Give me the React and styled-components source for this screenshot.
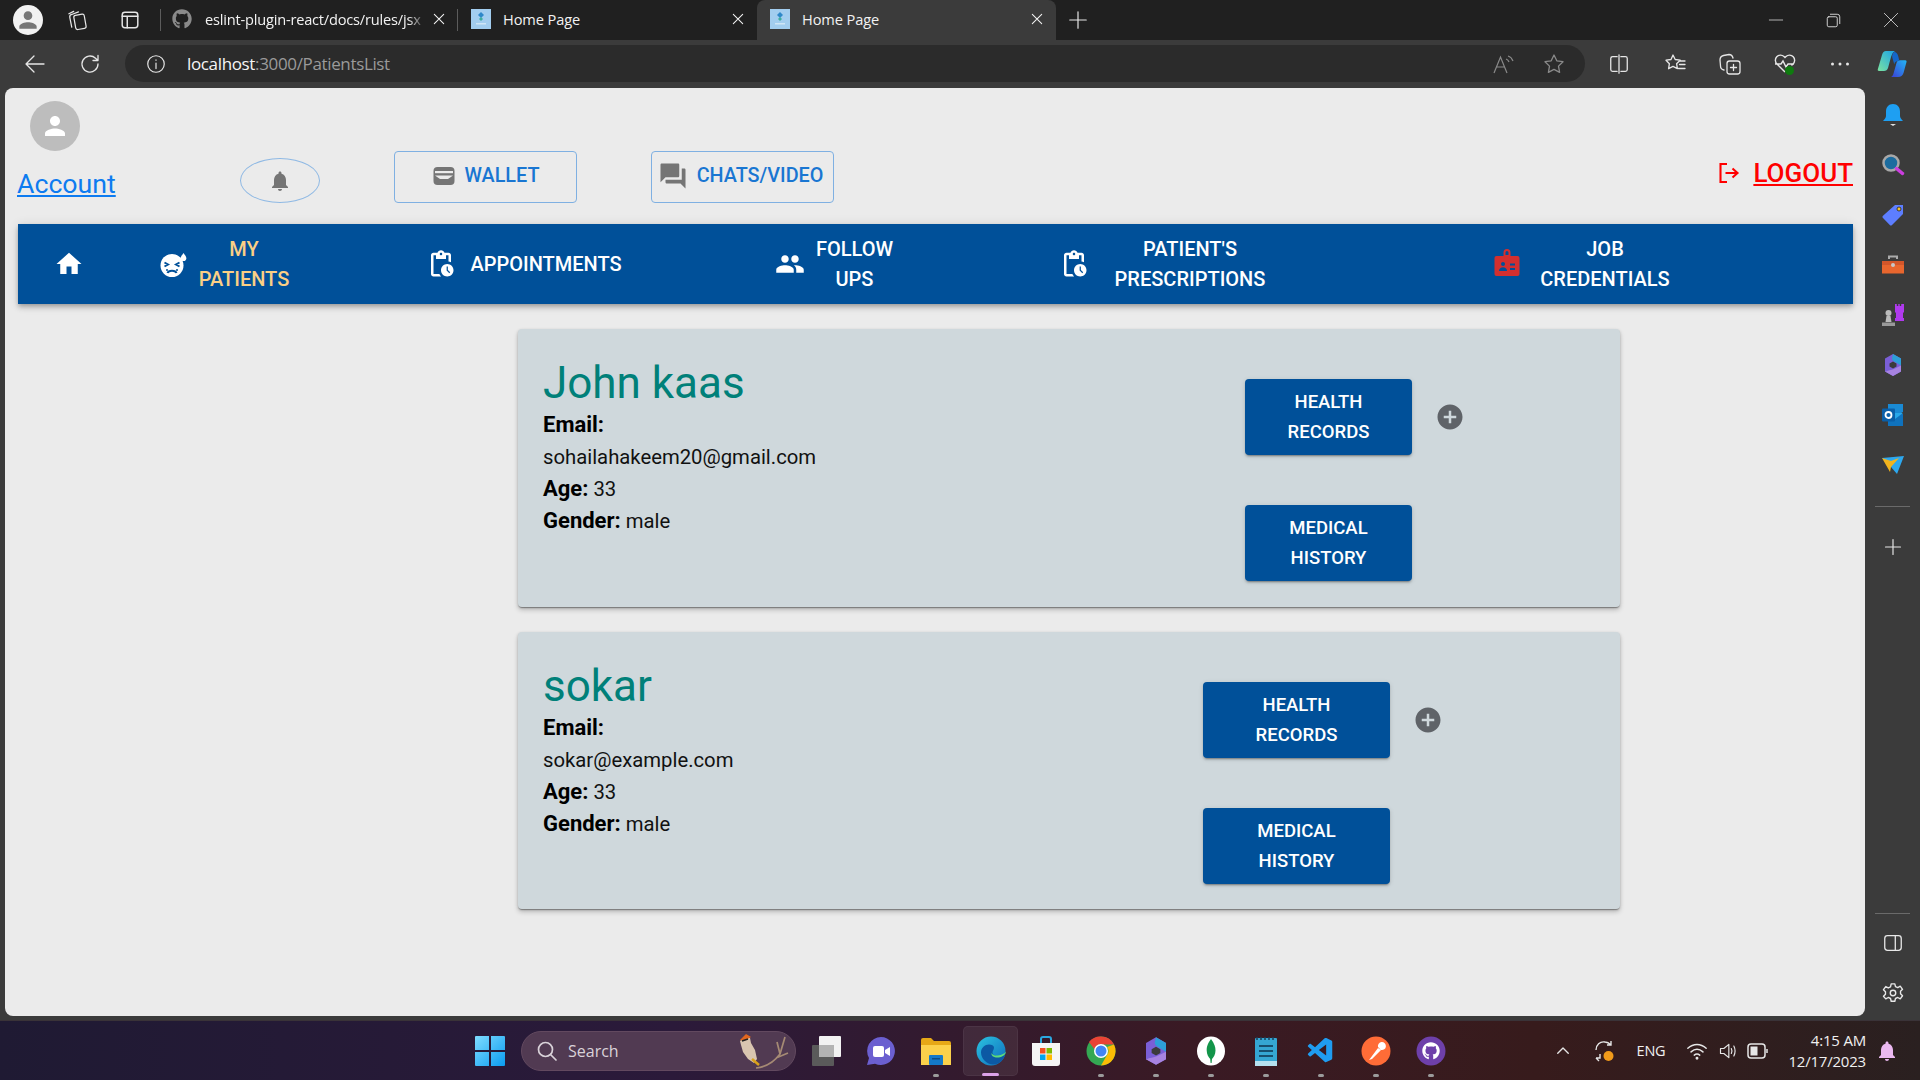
import React from "react";
import styled, { createGlobalStyle } from "styled-components";
import { FaGithub } from "react-icons/fa";
import { VscVscode } from "react-icons/vsc";

const Global = createGlobalStyle`
  html, body { margin: 0; padding: 0; background: #3b3b3b; }
  #root { width: 1920px; height: 1080px; overflow: hidden; }
  * { box-sizing: border-box; }
`;

const Shell = styled.div`
  width: 1920px; height: 1080px; display: flex; flex-direction: column;
  background: #3b3b3b; font-family: Roboto, sans-serif;
`;
const TabStrip = styled.div`
  height: 40px; flex: none; display: flex; align-items: center; background: #202020;
  padding-left: 13px; color: #f2f2f2; font-family: "Open Sans", sans-serif;
`;
const Profile = styled.div`
  width: 30px; height: 30px; border-radius: 50%; background: #f2f2f2; flex: none;
  display: flex; align-items: center; justify-content: center; overflow: hidden;
`;
const Slot = styled.div`
  width: ${p => p.$w}px; height: ${p => p.$h || 40}px; flex: none;
  display: flex; align-items: center; justify-content: center; color: ${p => p.$c || "#e6e6e6"};
`;
const TabSep = styled.div`
  width: 1px; height: 22px; background: #5c5c5c; flex: none; margin-left: ${p => p.$ml || 0}px;
`;
const Tab = styled.div`
  width: ${p => p.$w}px; height: 40px; flex: none; display: flex; align-items: center;
  padding: 0 ${p => p.$pr}px 2px ${p => p.$pl}px; gap: ${p => p.$gap}px;
  background: ${p => (p.$active ? "#3b3b3b" : "transparent")};
  border-radius: 8px 8px 0 0;
  > svg { flex: none; }
`;
const TabTitle = styled.span`
  flex: 1; min-width: 0; font-size: 14.6px; white-space: nowrap; letter-spacing: ${p => (p.$fade ? "-0.2px" : "-0.1px")};
  ${p => p.$fade && `
    margin-right: -8px;
    -webkit-mask-image: linear-gradient(to right, #000 92%, transparent 100%);
  `}
`;
const Favicon = styled.div`
  width: 20px; height: 20px; flex: none; background: #a2cdef;
  display: flex; align-items: center; justify-content: center;
`;
const WindowControls = styled.div`
  margin-left: auto; display: flex; flex: none;
`;
const Toolbar = styled.div`
  height: 48px; flex: none; display: flex; align-items: flex-start; background: #3b3b3b; padding-top: 5px;
`;
const AddressBar = styled.div`
  width: 1460px; height: 37px; flex: none; border-radius: 19px; background: #2b2b2b; padding-right: 6px;
  display: flex; align-items: center; font-family: "Open Sans", sans-serif;
`;
const Url = styled.div`
  font-size: 17px; color: #9a9a9a; letter-spacing: -0.35px; white-space: nowrap; flex: 1;
  b { font-weight: 400; color: #f5f5f5; }
`;
const Middle = styled.div`
  flex: 1; min-height: 0; display: flex; padding-left: 5px;
`;
const Page = styled.div`
  width: 1860px; height: 928px; flex: none; background: #ebebeb; border-radius: 8px;
`;
const Header = styled.header`
  height: 136px; display: flex; align-items: flex-end; padding: 0 12px 21px 12px;
`;
const AccountCol = styled.div`
  width: 97px; flex: none; display: flex; flex-direction: column;
`;
const Avatar = styled.div`
  width: 50px; height: 50px; margin-left: 13px; border-radius: 50%; background: #bdbdbd;
  display: flex; align-items: center; justify-content: center; color: #fff;
`;
const AccountLink = styled.a`
  font-size: 26.7px; line-height: 38px; margin-top: 14px; color: #0d7bf0; text-decoration: underline;
`;
const BellButton = styled.button`
  width: 80px; height: 45px; margin-left: 126px; flex: none; border-radius: 50%; padding: 0;
  border: 1px solid #8fb9e4; background: transparent; color: #757575;
  display: flex; align-items: center; justify-content: center;
`;
const OutlineButton = styled.button`
  width: 183px; height: 52px; margin-left: 74px; flex: none; border-radius: 4px; padding: 0 ${p => p.$pr || 0}px 2px 0;
  border: 1px solid #7fb0e2; background: transparent; color: #1976d2;
  display: flex; align-items: center; justify-content: center; gap: 9px;
  font: 500 19.8px/30px Roboto, sans-serif; text-transform: uppercase;
  svg { color: #757575; flex: none; }
`;
const Logout = styled.a`
  margin-left: auto; margin-bottom: 12px; display: flex; align-items: center; gap: 12px; color: #f00;
  font: 500 26px/36px Roboto, sans-serif; text-transform: uppercase;
  span { text-decoration: underline; }
`;
const Nav = styled.nav`
  width: 1835px; height: 80px; margin-left: 1px; background: #005099; color: #fff;
  display: grid; grid-template-columns: 102px 208px 392px 228px 428px 410px;
  box-shadow: 0 2px 4px -1px rgba(0,0,0,.2), 0 4px 5px rgba(0,0,0,.14), 0 1px 10px rgba(0,0,0,.12);
`;
const NavRow = styled.div`
  padding-left: 12px;
`;
const NavItem = styled.a`
  display: flex; align-items: center; justify-content: center; gap: ${p => p.$gap || 0}px;
  color: ${p => p.$c || "#fff"};
  svg { flex: none; }
`;
const NavLabel = styled.span`
  width: min-content; text-align: center; font: 500 20px/30px Roboto, sans-serif; text-transform: uppercase;
`;
const Main = styled.main`
  padding: 25px 0 0 513px; display: flex; flex-direction: column; gap: 25px;
`;
const Card = styled.section`
  width: 1102px; height: ${p => p.$h}px; background: #cfd8dc; border-radius: 4px; padding: 0 0 0 25px;
  display: grid; grid-template-columns: ${p => p.$left}px auto;
  box-shadow: 0 2px 1px -1px rgba(0,0,0,.2), 0 1px 1px rgba(0,0,0,.14), 0 1px 3px rgba(0,0,0,.12), 0 3px 5px rgba(0,0,0,.2);
`;
const Info = styled.div`
  padding-top: 28px; font-size: 20.3px; line-height: 32px; color: #111;
  strong { font-weight: 700; font-size: 22px; color: #000; }
`;
const Name = styled.h2`
  margin: 0; font: 400 44px/52px Roboto, sans-serif; color: #008079;
`;
const InfoLine = styled.div`
  height: 32px;
`;
const Actions = styled.div`
  padding-top: 50px; display: flex; flex-direction: column; gap: 50px;
`;
const ActionRow = styled.div`
  display: flex; align-items: center; gap: 23px; color: #5f6368;
`;
const ActionButton = styled.button`
  width: ${p => p.$w}px; height: 76px; border: 0; padding: 0; border-radius: 4px; background: #005099; color: #fff;
  font: 500 18.5px/30px Roboto, sans-serif; text-transform: uppercase;
  display: flex; align-items: center; justify-content: center; flex: none;
  box-shadow: 0 3px 1px -2px rgba(0,0,0,.2), 0 2px 2px rgba(0,0,0,.14), 0 1px 5px rgba(0,0,0,.12);
  span { width: min-content; }
`;
const Rail = styled.aside`
  flex: 1; display: flex; flex-direction: column; align-items: center; padding: 2px 0;
`;
const RailItem = styled.div`
  width: 50px; height: 50px; flex: none; display: flex; align-items: center; justify-content: center; color: #e8e8e8;
`;
const RailLine = styled.div`
  width: 35px; height: 1px; background: #6a6a6a; flex: none;
  margin-top: ${p => p.$mt || 0}px; margin-bottom: ${p => p.$mb || 0}px;
`;
const RailBottom = styled.div`
  margin-top: auto; display: flex; flex-direction: column; align-items: center;
`;
const Taskbar = styled.footer`
  height: 60px; flex: none; display: flex; align-items: center; padding-left: 462px; color: #fff;
  background: linear-gradient(90deg, #1f1a33 0%, #2b1a3a 35%, #3a1a24 62%, #371b1c 80%, #2a2020 100%);
  border-top: 1px solid #3a3338; font-family: "Open Sans", sans-serif;
`;
const TaskItem = styled.div`
  position: relative; width: 55px; height: 50px; flex: none; display: flex; align-items: center; justify-content: center;
  ${p => p.$active && "background: rgba(255,255,255,.07); border-radius: 5px; border: 1px solid rgba(255,255,255,.05);"}
`;
const Indicator = styled.span`
  position: absolute; bottom: -1px; left: 50%; height: 3px; border-radius: 2px;
  width: ${p => (p.$active ? 17 : 6)}px; margin-left: ${p => (p.$active ? -8.5 : -3)}px;
  background: ${p => (p.$active ? "#dca2e8" : "#9b9b9b")};
`;
const Search = styled.div`
  width: 275px; height: 40px; margin: 0 2px 0 4px; flex: none; border-radius: 20px; background: #513a52;
  border: 1px solid #62495f; display: flex; align-items: center; padding: 0 5px 0 13px; color: #d9d2d9; font-size: 16px; gap: 9px;
  span { flex: 1; }
`;
const Tray = styled.div`
  margin-left: auto; padding-right: 12px; display: flex; align-items: center; height: 60px; color: #f0f0f0;
`;
const TrayText = styled.div`
  width: ${p => p.$w}px; text-align: ${p => p.$a || "center"}; font-size: ${p => p.$s || 13}px; line-height: 21px; flex: none;
  letter-spacing: -0.2px;
`;

const Mui = ({ d, s = 24, c, ...rest }) => (
  <svg width={s} height={s} viewBox="0 0 24 24" fill={c || "currentColor"} {...rest}><path d={d} /></svg>
);
const P = {
  person: "M12 12c2.21 0 4-1.79 4-4s-1.79-4-4-4-4 1.79-4 4 1.79 4 4 4zm0 2c-2.67 0-8 1.34-8 4v2h16v-2c0-2.66-5.33-4-8-4z",
  bell: "M12 22c1.1 0 2-.9 2-2h-4c0 1.1.89 2 2 2zm6-6v-5c0-3.07-1.64-5.64-4.5-6.32V4c0-.83-.67-1.5-1.5-1.5s-1.5.67-1.5 1.5v.68C7.63 5.36 6 7.92 6 11v5l-2 2v1h16v-1l-2-2z",
  home: "M10 20v-6h4v6h5v-8h3L12 3 2 12h3v8z",
  forum: "M21 6h-2v9H6v2c0 .55.45 1 1 1h11l4 4V7c0-.55-.45-1-1-1zm-4 6V3c0-.55-.45-1-1-1H3c-.55 0-1 .45-1 1v14l4-4h10c.55 0 1-.45 1-1z",
  people: "M16 11c1.66 0 2.99-1.34 2.99-3S17.66 5 16 5c-1.66 0-3 1.34-3 3s1.34 3 3 3zm-8 0c1.66 0 2.99-1.34 2.99-3S9.66 5 8 5C6.34 5 5 6.34 5 8s1.34 3 3 3zm0 2c-2.33 0-7 1.17-7 3.5V19h14v-2.5c0-2.33-4.67-3.5-7-3.5zm8 0c-.29 0-.62.02-.97.05 1.16.84 1.97 1.97 1.97 3.45V19h6v-2.5c0-2.33-4.67-3.5-7-3.5z",
  add: "M12 2C6.48 2 2 6.48 2 12s4.48 10 10 10 10-4.48 10-10S17.52 2 12 2zm5 11h-4v4h-2v-4H7v-2h4V7h2v4h4v2z",
  pending: "M17 12c-2.76 0-5 2.24-5 5s2.24 5 5 5 5-2.24 5-5-2.24-5-5-5zm1.65 7.35L16.5 17.2V14h1v2.79l1.85 1.85-.7.71zM18 3h-3.18C14.4 1.84 13.3 1 12 1s-2.4.84-2.82 2H6c-1.1 0-2 .9-2 2v15c0 1.1.9 2 2 2h6.11c-.59-.57-1.07-1.25-1.42-2H6V5h2v3h8V5h2v5.08c.71.1 1.38.31 2 .6V5c0-1.1-.9-2-2-2zm-6 2c-.55 0-1-.45-1-1s.45-1 1-1 1 .45 1 1-.45 1-1 1z",
};

const Line = ({ s = 20, w = 1.3, children, c = "currentColor" }) => (
  <svg width={s} height={s} viewBox="0 0 24 24" fill="none" stroke={c} strokeWidth={w} strokeLinecap="round" strokeLinejoin="round">{children}</svg>
);

const WalletIcon = () => (
  <svg width="24" height="24" viewBox="0 0 24 24" fill="currentColor">
    <rect x="1.5" y="3" width="21" height="18" rx="4" />
    <rect x="3" y="7" width="18" height="2.2" fill="#ebebeb" />
    <path d="M3 11.5h18l-5 3.6H8z" fill="#ebebeb" />
  </svg>
);
const SickIcon = () => (
  <svg width="30" height="30" viewBox="0 0 30 30">
    <circle cx="13" cy="16.500" r="11.500" fill="#fff" />
    <path d="M24.500 4c1.800 2.400 2.800 3.800 2.800 5.200a2.800 2.800 0 0 1-5.600 0c0-1.400 1-2.800 2.800-5.200z" fill="#fff" />
    <path d="M5.500 13.500l3.500 2-3.500 2M20.500 13.500l-3.500 2 3.500 2M8.500 24c1-3 8-3 9 0" stroke="#005099" strokeWidth="2" fill="none" />
    <circle cx="8" cy="21" r="1" fill="#005099" /><circle cx="18" cy="21" r="1" fill="#005099" />
  </svg>
);
const BadgeIcon = () => (
  <svg width="30" height="30" viewBox="0 0 30 30">
    <path d="M12.500 8V3.500a2.500 2.500 0 0 1 5 0V8" fill="none" stroke="#d32f2f" strokeWidth="2" />
    <rect x="2.500" y="7" width="25" height="20" rx="2" fill="#d32f2f" />
    <rect x="12.500" y="6" width="5" height="4" fill="#d32f2f" />
    <circle cx="11" cy="15" r="2" fill="#005099" />
    <path d="M7 22c0-5 8-5 8 0z" fill="#005099" />
    <path d="M18 14.500h5v2h-5zM18 19h5v2h-5z" fill="#005099" />
  </svg>
);
const LogoutIcon = () => (
  <svg width="24" height="24" viewBox="0 0 24 24" fill="none" stroke="#f00" strokeWidth="2.100">
    <path d="M10 3H3.500v18H10M8.500 12H20M15.500 7.500L20.500 12l-5 4.500" />
  </svg>
);
const FaviconMark = () => (
  <svg width="12" height="14" viewBox="0 0 12 14">
    <path d="M6 0l3 3-3 3-3-3z" fill="#2f88c9" />
    <path d="M6 5l2 2-2 2-2-2z" fill="#3fae9f" />
    <rect x="1" y="11" width="10" height="1.500" fill="#cfe6f6" />
  </svg>
);
const Copilot = () => (
  <svg width="30" height="30" viewBox="0 0 30 30">
    <defs>
      <linearGradient id="cp1" x1="0" y1="1" x2="1" y2="0"><stop offset="0" stopColor="#7be3a0" /><stop offset="1" stopColor="#1aa2e8" /></linearGradient>
      <linearGradient id="cp2" x1="0" y1="1" x2="1" y2="0"><stop offset="0" stopColor="#3b3fd6" /><stop offset="1" stopColor="#22b6f5" /></linearGradient>
    </defs>
    <path d="M9 2h9c-2 1-3 3-4 6l-3 11c-.6 2-2 3-4 3H2c-1 0-1.500-.7-1.200-1.700L5 6c.7-2.500 2-4 4-4z" fill="url(#cp1)" />
    <path d="M14 28h7c3 0 4.500-1.500 5.500-4l3-11c.3-1-.3-1.800-1.200-1.800H23c-2 0-3 1-3.500 2.800l-3 10.500c-.5 1.800-1.300 2.800-2.500 3.500z" fill="url(#cp2)" />
    <path d="M17 3c2.500 0 3.500 1.500 4.300 4.500l1 4-3 1c-1 .4-1.800 1.500-2 3l-2-7c-.5-2 .4-4.500 1.700-5.500z" fill="#1467c9" />
  </svg>
);
const Copilot365 = ({ s = 24 }) => (
  <svg width={s} height={s} viewBox="0 0 24 24">
    <path d="M4 5.500L12 1l8 4.500V18.500L12 23l-8-4.500z" fill="#7a5fd6" />
    <path d="M12 1l8 4.500v7L14 9c-2-1-3-2-3-4z" fill="#2d9fd8" />
    <path d="M4 18.500l8 4.500 8-4.500v-6l-7 3.500c-3 1.500-6 1-9 3z" fill="#a783e0" />
    <path d="M12 8.500l3.500 2v3l-3.500 2-3.500-2v-3z" fill="#3b3b3b" />
  </svg>
);

const railIcons = [
  <svg width="22" height="24" viewBox="0 0 22 24" key="bell"><path d="M11 1c4.500 0 7 3.300 7 7.500V13c0 2 1.500 3 3 5H1c1.500-2 3-3 3-5V8.500C4 4.300 6.500 1 11 1z" fill="#1e9ff2" /><path d="M8 21h6l-3 2z" fill="#ddd" /></svg>,
  <svg width="24" height="24" viewBox="0 0 24 24" key="s"><circle cx="10" cy="10" r="7.500" fill="#1c6c9f" stroke="#a8a8a8" strokeWidth="2.500" /><path d="M15.500 15.500l6 5" stroke="#cc3ee0" strokeWidth="3.500" strokeLinecap="round" /></svg>,
  <svg width="24" height="24" viewBox="0 0 24 24" key="t"><path d="M14 2h8v9L11 22c-.7.700-1.500.700-2.200 0L2 15c-.7-.7-.7-1.500 0-2.200z" fill="#5d7eff" /><circle cx="18" cy="6" r="2" fill="#f3c22a" stroke="#222" strokeWidth=".8" /></svg>,
  <svg width="24" height="24" viewBox="0 0 24 24" key="b"><path d="M8 6V3.500h8V6" fill="none" stroke="#aaa" strokeWidth="2" /><path d="M1 8h22v4H1z" fill="#d3562a" /><path d="M1 12h22v8.500H1z" fill="#e8662e" /><circle cx="12" cy="12" r="2" fill="#c8c8c8" /></svg>,
  <svg width="24" height="24" viewBox="0 0 24 24" key="c"><path d="M14 1h1.800v2h1.500V1h1.400v2h1.500V1H23v8l-1 1v5h1v3h-9v-3h1v-5l-1-1z" fill="#b03aee" /><circle cx="7.500" cy="10" r="3" fill="#bbb" /><path d="M5.500 13h4l1 6H4.500z" fill="#bbb" /><path d="M1 19.500h13V23H1z" fill="#999" /></svg>,
  <Copilot365 key="m" />,
  <svg width="24" height="24" viewBox="0 0 24 24" key="o"><path d="M7 1h15v8l-7 4H7z" fill="#1a8ad4" /><path d="M7 11h15v12H7z" fill="#0f72bd" /><path d="M22 10l-8 6-7-6" fill="#28a8ea" /><rect x="1" y="5.500" width="13" height="13" rx="1" fill="#0a5fa8" /><circle cx="7.500" cy="12" r="3" fill="none" stroke="#fff" strokeWidth="1.800" /></svg>,
  <svg width="24" height="20" viewBox="0 0 24 20" key="p"><path d="M1 3l22-2-7 18-6-7z" fill="#2da8ef" /><path d="M1 3l9 3 8-3-8 9-1 5z" fill="#f2b41d" /></svg>,
];

const apps = [
  { k: "tv", el: <svg width="30" height="30" viewBox="0 0 30 30"><rect x="1" y="9" width="22" height="21" rx="1" fill="#5a5a5a" /><rect x="8" y="0" width="22" height="21" rx="1" fill="#f2f2f2" /><rect x="8" y="9" width="15" height="12" fill="#b3b3b3" /></svg> },
  { k: "meet", el: <svg width="30" height="30" viewBox="0 0 30 30"><path d="M15 1a14 14 0 1 1-6 26.700L1 29l2-7A14 14 0 0 1 15 1z" fill="#6b5fd0" /><rect x="7" y="10" width="11" height="11" rx="2" fill="#fff" /><path d="M19 14l5-3v9l-5-3z" fill="#fff" /></svg> },
  { k: "files", dot: true, el: <svg width="30" height="28" viewBox="0 0 30 28"><path d="M0 3a2 2 0 0 1 2-2h8l3 3h15a2 2 0 0 1 2 2v3H0z" fill="#e6a817" /><path d="M0 8h30v20H0z" fill="#fbd14b" /><rect x="8" y="18" width="14" height="10" rx="1" fill="#1479c9" /><rect x="11" y="21" width="8" height="1.500" fill="#0c4d86" /></svg> },
  { k: "edge", active: true, el: <svg width="30" height="30" viewBox="0 0 30 30"><defs><linearGradient id="eg" x1="0" y1="0" x2="1" y2="1"><stop offset="0" stopColor="#2bc4e0" /><stop offset="1" stopColor="#0f6cbd" /></linearGradient></defs><circle cx="15" cy="15" r="14.500" fill="url(#eg)" /><path d="M29.500 15c0 3-4 5-7.500 5-3 0-5.500-1-5.500-3.500 0-2 1.500-2.500 1.500-5 0-2-2.500-3-5-3-4 0-8 3.500-8 8 0 6 6 12 12 12 7 0 12.500-6 12.500-13.500z" fill="#0c59a4" /><path d="M29.800 15.500c0 4-5 6-8.500 6-3.500 0-6-1.500-6-4.500 0 0 1.500 3 6.500 2.500 4-.4 7-2 8-4z" fill="#5fdc7a" /></svg> },
  { k: "store", el: <svg width="28" height="30" viewBox="0 0 28 30"><path d="M9 7V3a2 2 0 0 1 2-2h6a2 2 0 0 1 2 2v4" fill="none" stroke="#2ba8e0" strokeWidth="2" /><path d="M0 7h28v20a3 3 0 0 1-3 3H3a3 3 0 0 1-3-3z" fill="#f5f5f5" /><rect x="8" y="12" width="5.500" height="5.500" fill="#f25022" /><rect x="14.500" y="12" width="5.500" height="5.500" fill="#7fba00" /><rect x="8" y="18.500" width="5.500" height="5.500" fill="#00a4ef" /><rect x="14.500" y="18.500" width="5.500" height="5.500" fill="#ffb900" /></svg> },
  { k: "chrome", dot: true, el: <svg width="30" height="30" viewBox="0 0 30 30"><circle cx="15" cy="15" r="14.500" fill="#34a853" /><path d="M15 .5A14.500 14.500 0 0 1 28 8.500H15a6.500 6.500 0 0 0-6.300 5L3 6A14.500 14.500 0 0 1 15 .5z" fill="#ea4335" /><path d="M28 8.500a14.500 14.500 0 0 1-13 21L21 19a6.500 6.500 0 0 0 0-8z" fill="#fbbc05" /><circle cx="15" cy="15" r="7" fill="#fff" /><circle cx="15" cy="15" r="5.500" fill="#4285f4" /></svg> },
  { k: "m365", dot: true, el: <Copilot365 s={30} /> },
  { k: "mongo", dot: true, el: <svg width="30" height="30" viewBox="0 0 30 30"><ellipse cx="15" cy="15" rx="14" ry="14.500" fill="#fff" /><path d="M15 3c3.500 4.500 4.500 8 4.500 11.500 0 4-2 7-3.500 8.500l-.4 4h-1l-.4-4c-1.500-1.500-3.500-4.500-3.500-8.500C10.700 11 11.500 7.500 15 3z" fill="#13954a" /></svg> },
  { k: "notes", dot: true, el: <svg width="24" height="30" viewBox="0 0 24 30"><rect x="1" y="2" width="22" height="28" rx="1" fill="#35a7d3" /><rect x="1" y="25" width="22" height="5" fill="#b5e1ef" /><path d="M3 1v3M7 1v3M11 1v3M15 1v3M19 1v3" stroke="#17405c" strokeWidth="1.500" /><path d="M5 10h14M5 15h14M5 20h14" stroke="#17506f" strokeWidth="2" /></svg> },
  { k: "code", dot: true, el: <VscVscode size={30} color="#1f9cf0" /> },
  { k: "postman", dot: true, el: <svg width="30" height="30" viewBox="0 0 30 30"><circle cx="15" cy="15" r="14.500" fill="#ff6c37" /><path d="M8 24l9-12 3 2-9 9zM17 11a4 4 0 1 1 3 3" fill="#fff" /></svg> },
  { k: "gh", dot: true, el: <svg width="30" height="30" viewBox="0 0 30 30"><circle cx="15" cy="15" r="14.500" fill="#6e40aa" /><g transform="translate(6 6)"><FaGithub size={18} color="#fff" /></g></svg> },
];

const Patient = ({ name, email, h, left, w }) => (
  <Card $h={h} $left={left}>
    <Info>
      <Name>{name}</Name>
      <InfoLine><strong>Email:</strong></InfoLine>
      <InfoLine>{email}</InfoLine>
      <InfoLine><strong>Age:</strong> 33</InfoLine>
      <InfoLine><strong>Gender:</strong> male</InfoLine>
    </Info>
    <Actions>
      <ActionRow>
        <ActionButton $w={w}><span>Health Records</span></ActionButton>
        <Mui d={P.add} s={30} />
      </ActionRow>
      <ActionRow>
        <ActionButton $w={w}><span>Medical History</span></ActionButton>
      </ActionRow>
    </Actions>
  </Card>
);

export default function App() {
  return (
    <Shell>
      <Global />
      <TabStrip>
        <Profile><Mui d={P.person} s={26} c="#777" /></Profile>
        <Slot $w={68}>
          <Line s={23}><rect x="9" y="6" width="11" height="15" rx="2" transform="rotate(-10 14 13)" /><path d="M6 19L4 9c-.3-1.500.5-3 2-3.300L13 3M8 2.500L3 5" /></Line>
        </Slot>
        <Slot $w={38}>
          <Line s={22} w={1.6}><rect x="3.500" y="3.500" width="17" height="17" rx="3" /><path d="M3.500 8h17M9 8v12.500" /></Line>
        </Slot>
        <TabSep $ml={11} />
        <Tab $w={296} $pl={11} $pr={10} $gap={13}>
          <FaGithub size={20} color="#8a8a8a" />
          <TabTitle $fade>eslint-plugin-react/docs/rules/jsx</TabTitle>
          <Line s={16} w={1.6}><path d="M5 5l14 14M19 5L5 19" /></Line>
        </Tab>
        <TabSep />
        <Tab $w={299} $pl={13} $pr={11} $gap={12}>
          <Favicon><FaviconMark /></Favicon>
          <TabTitle>Home Page</TabTitle>
          <Line s={16} w={1.6}><path d="M5 5l14 14M19 5L5 19" /></Line>
        </Tab>
        <Tab $w={299} $pl={13} $pr={11} $gap={12} $active>
          <Favicon><FaviconMark /></Favicon>
          <TabTitle>Home Page</TabTitle>
          <Line s={16} w={1.6}><path d="M5 5l14 14M19 5L5 19" /></Line>
        </Tab>
        <Slot $w={44}><Line s={22} w={1.3}><path d="M12 3v18M3 12h18" /></Line></Slot>
        <WindowControls>
          <Slot $w={58}><Line s={16} w={1.1}><path d="M2 12h20" /></Line></Slot>
          <Slot $w={57}><Line s={15} w={1.4}><rect x="2" y="6" width="16" height="16" rx="2.500" /><path d="M7 2h11a4 4 0 0 1 4 4v11" /></Line></Slot>
          <Slot $w={58}><Line s={16} w={1.2}><path d="M2 2l20 20M22 2L2 22" /></Line></Slot>
        </WindowControls>
      </TabStrip>
      <Toolbar>
        <Slot $w={70} $h={37}><Line s={24} w={1.3}><path d="M21 12H3M11 4l-8 8 8 8" /></Line></Slot>
        <Slot $w={40} $h={37}><Line s={24} w={1.3}><path d="M20 12a8 8 0 1 1-2.500-5.800L20 8.500M20 3.500v5h-5" /></Line></Slot>
        <Slot $w={15} $h={37} />
        <AddressBar>
          <Slot $w={62} $h={37}><Line s={22} w={1.3}><circle cx="12" cy="12" r="9" /><path d="M12 11v6M12 7.500v.5" /></Line></Slot>
          <Url><b>localhost</b>:3000/PatientsList</Url>
          <Slot $w={50} $h={37} $c="#8a8a8a"><svg width="22" height="20" viewBox="0 0 22 20" fill="none" stroke="currentColor" strokeWidth="1.200"><path d="M1 19L7.500 3 14 19M3.500 13h8" /><path d="M13 5c1.500.4 2.500 1.500 3 3M15 2c2.500.7 4 2.500 5 5" /></svg></Slot>
          <Slot $w={50} $h={37} $c="#8a8a8a"><Line s={24} w={1.3}><path d="M12 3l2.800 5.800 6.200.9-4.500 4.400 1.100 6.300L12 17.400 6.400 20.400l1.100-6.300L3 9.700l6.200-.9z" /></Line></Slot>
        </AddressBar>
        <Slot $w={6} $h={37} />
        <Slot $w={56} $h={37}><Line s={22} w={1.4}><path d="M10 4H5a2 2 0 0 0-2 2v12a2 2 0 0 0 2 2h5M14 4h5a2 2 0 0 1 2 2v12a2 2 0 0 1-2 2h-5M12 2v20" /></Line></Slot>
        <Slot $w={55} $h={37}><Line s={24} w={1.3}><path d="M10 3l2.200 4.500 5 .7-3.600 3.500.8 5-4.400-2.300-4.400 2.300.8-5L3 8.200l5-.7zM16.500 12.500H22M17 9h5M15.500 16.500H22" /></Line></Slot>
        <Slot $w={55} $h={37}><Line s={24} w={1.3}><rect x="9" y="9" width="13" height="13" rx="2.500" /><path d="M15.500 12.500v6M12.500 15.500h6M6 18c-2-.5-3.500-2-3.500-4l-.5-6c0-2 1.500-4 3.500-4.500L11 2.500c2 0 3.500 1.500 4 3.500" /></Line></Slot>
        <Slot $w={55} $h={37}><svg width="24" height="24" viewBox="0 0 24 24" fill="none" stroke="currentColor" strokeWidth="1.400"><path d="M12 20l-8-8a5 5 0 0 1 7-7.500l1 1 1-1A5 5 0 0 1 20 12l-1.500 1.500M2 12h6l2-3 3 6 2-3h6" /><circle cx="16.500" cy="18.500" r="4.500" fill="#0f7b0f" stroke="none" /></svg></Slot>
        <Slot $w={55} $h={37}><svg width="20" height="4" viewBox="0 0 20 4" fill="currentColor"><circle cx="2.500" cy="2" r="1.500" /><circle cx="10" cy="2" r="1.500" /><circle cx="17.500" cy="2" r="1.500" /></svg></Slot>
        <Slot $w={50} $h={37}><Copilot /></Slot>
      </Toolbar>
      <Middle>
        <Page>
          <Header>
            <AccountCol>
              <Avatar><Mui d={P.person} s={30} /></Avatar>
              <AccountLink>Account</AccountLink>
            </AccountCol>
            <BellButton><Mui d={P.bell} s={24} /></BellButton>
            <OutlineButton><WalletIcon />Wallet</OutlineButton>
            <OutlineButton $pr={4}><Mui d={P.forum} s={30} />Chats/Video</OutlineButton>
            <Logout><LogoutIcon /><span>Logout</span></Logout>
          </Header>
          <NavRow>
            <Nav>
              <NavItem><Mui d={P.home} s={30} /></NavItem>
              <NavItem $gap={10} $c="#fbcf85"><SickIcon /><NavLabel>My Patients</NavLabel></NavItem>
              <NavItem $gap={14}><Mui d={P.pending} s={30} /><NavLabel>Appointments</NavLabel></NavItem>
              <NavItem $gap={11}><Mui d={P.people} s={30} /><NavLabel>Follow Ups</NavLabel></NavItem>
              <NavItem $gap={26}><Mui d={P.pending} s={30} /><NavLabel>Patient's Prescriptions</NavLabel></NavItem>
              <NavItem $gap={18}><BadgeIcon /><NavLabel>Job Credentials</NavLabel></NavItem>
            </Nav>
          </NavRow>
          <Main>
            <Patient name="John kaas" email="sohailahakeem20@gmail.com" h={278} left={702} w={167} />
            <Patient name="sokar" email="sokar@example.com" h={277} left={660} w={187} />
          </Main>
        </Page>
        <Rail>
          {railIcons.map((el, i) => <RailItem key={i}>{el}</RailItem>)}
          <RailLine $mt={16} $mb={15} />
          <RailItem><Line s={20} w={1.4}><path d="M12 3v18M3 12h18" /></Line></RailItem>
          <RailBottom>
            <RailLine $mb={4} />
            <RailItem><Line s={22} w={1.4}><rect x="3" y="4" width="18" height="16" rx="3" /><path d="M14.500 4v16" /></Line></RailItem>
            <RailItem><svg width="22" height="22" viewBox="0 0 24 24" fill="none" stroke="currentColor" strokeWidth="1.500" strokeLinejoin="round"><circle cx="12" cy="12" r="3" /><path d="M10 2h4l.7 3 2.500 1.100 2.700-1.500 2.500 3.400-2.200 2.200v2.600l2.200 2.200-2.500 3.400-2.700-1.500-2.500 1.100-.7 3h-4l-.7-3-2.500-1.100-2.700 1.500L1.600 15.600l2.200-2.300v-2.600L1.600 8.400l2.500-3.400 2.700 1.500L9.300 5.400z" /></svg></RailItem>
          </RailBottom>
        </Rail>
      </Middle>
      <Taskbar>
        <TaskItem>
          <svg width="30" height="30" viewBox="0 0 30 30">
            <defs><linearGradient id="win" x1="0" y1="0" x2="1" y2="1"><stop offset="0" stopColor="#7fdcff" /><stop offset="1" stopColor="#0a9cf0" /></linearGradient></defs>
            <path d="M0 1a1 1 0 0 1 1-1h13v14H0zM16 0h13a1 1 0 0 1 1 1v13H16zM0 16h14v14H1a1 1 0 0 1-1-1zM16 16h14v13a1 1 0 0 1-1 1H16z" fill="url(#win)" />
          </svg>
        </TaskItem>
        <Search>
          <Line s={24} w={1.7}><circle cx="10.500" cy="10.500" r="7" /><path d="M15.500 15.500l5.500 5.500" /></Line>
          <span>Search</span>
          <svg width="54" height="38" viewBox="0 0 54 38" fill="none">
            <path d="M20 36c10-1 18-6 24-14l5-17M40 26l12-5M44 22l-3-12" stroke="#a58a74" strokeWidth="1.700" />
            <path d="M4 9l5-4 5 1 1 5 4 7 2 9-3 4-6-4-5-7-2-7z" fill="#d9c5b0" />
            <path d="M4 8l6-6 5 3-7 4z" fill="#e2661e" />
            <path d="M6 9l6-2" stroke="#222" strokeWidth="1.500" />
            <path d="M16 27l7 6" stroke="#d9a21b" strokeWidth="2.500" />
          </svg>
        </Search>
        {apps.map(a => (
          <TaskItem key={a.k} $active={a.active}>
            {a.el}
            {(a.dot || a.active) && <Indicator $active={a.active} />}
          </TaskItem>
        ))}
        <Tray>
          <Slot $w={48} $h={60}><Line s={18} w={1.8}><path d="M5 15l7-7 7 7" /></Line></Slot>
          <Slot $w={34} $h={60}><svg width="26" height="26" viewBox="0 0 26 26" fill="none" stroke="currentColor" strokeWidth="1.400"><path d="M5 12c0-5 4-9 9-8 3 0 5 2 6 3M20 3v4h-4M5 20l3 3M5 20h4v-4" /><circle cx="17.500" cy="18" r="5" fill="#f09a1a" stroke="none" /></svg></Slot>
          <TrayText $w={60} $s={14.5}>ENG</TrayText>
          <Slot $w={32} $h={60}><Line s={22} w={1.6}><path d="M2 9c6-5.500 14-5.500 20 0M5.500 13c4-3.500 9-3.500 13 0M9 16.500c2-1.500 4-1.500 6 0" /><circle cx="12" cy="20" r=".8" /></Line></Slot>
          <Slot $w={29} $h={60}><Line s={20} w={1.4}><path d="M3 9v6h4l6 5V4L7 9zM16 9c1 2 1 4 0 6M19 6c2 4 2 8 0 12" /></Line></Slot>
          <Slot $w={32} $h={60}><svg width="22" height="20" viewBox="0 0 22 20" fill="none" stroke="currentColor" strokeWidth="1.500"><rect x="1" y="3" width="17" height="14" rx="3" /><rect x="3.500" y="5.500" width="7" height="9" fill="currentColor" stroke="none" /><path d="M20 8v4" /></svg></Slot>
          <TrayText $w={92} $a="right" $s={15}>4:15 AM<br />12/17/2023</TrayText>
          <Slot $w={42} $h={60} $c="#eab8f0"><Mui d={P.bell} s={24} /></Slot>
        </Tray>
      </Taskbar>
    </Shell>
  );
}
